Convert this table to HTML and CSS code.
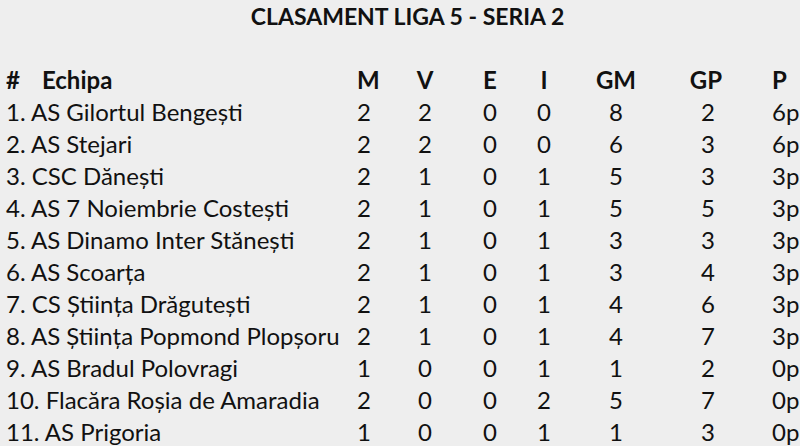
FILE: index.html
```
<!DOCTYPE html>
<html lang="ro">
<head>
<meta charset="utf-8">
<title>Clasament Liga 5 - Seria 2</title>
<link rel="stylesheet" href="styles.css">
</head>
<body>
<h1 class="title">CLASAMENT LIGA 5 - SERIA 2</h1>
<div class="table">
  <div class="row head">
    <div class="team"><span class="hash">#</span>Echipa</div>
    <div class="c m">M</div><div class="c">V</div><div class="c">E</div><div class="c">I</div><div class="c">GM</div><div class="c">GP</div><div class="c p">P</div>
  </div>
  <div class="row"><div class="team">1. AS Gilortul Bengești</div><div class="c m">2</div><div class="c">2</div><div class="c">0</div><div class="c">0</div><div class="c">8</div><div class="c gp">2</div><div class="c p">6p</div></div>
  <div class="row"><div class="team">2. AS Stejari</div><div class="c m">2</div><div class="c">2</div><div class="c">0</div><div class="c">0</div><div class="c">6</div><div class="c gp">3</div><div class="c p">6p</div></div>
  <div class="row"><div class="team">3. CSC Dănești</div><div class="c m">2</div><div class="c">1</div><div class="c">0</div><div class="c">1</div><div class="c">5</div><div class="c gp">3</div><div class="c p">3p</div></div>
  <div class="row"><div class="team">4. AS 7 Noiembrie Costești</div><div class="c m">2</div><div class="c">1</div><div class="c">0</div><div class="c">1</div><div class="c">5</div><div class="c gp">5</div><div class="c p">3p</div></div>
  <div class="row"><div class="team">5. AS Dinamo Inter Stănești</div><div class="c m">2</div><div class="c">1</div><div class="c">0</div><div class="c">1</div><div class="c">3</div><div class="c gp">3</div><div class="c p">3p</div></div>
  <div class="row"><div class="team">6. AS Scoarța</div><div class="c m">2</div><div class="c">1</div><div class="c">0</div><div class="c">1</div><div class="c">3</div><div class="c gp">4</div><div class="c p">3p</div></div>
  <div class="row"><div class="team">7. CS Știința Drăgutești</div><div class="c m">2</div><div class="c">1</div><div class="c">0</div><div class="c">1</div><div class="c">4</div><div class="c gp">6</div><div class="c p">3p</div></div>
  <div class="row"><div class="team">8. AS Știința Popmond Plopșoru</div><div class="c m">2</div><div class="c">1</div><div class="c">0</div><div class="c">1</div><div class="c">4</div><div class="c gp">7</div><div class="c p">3p</div></div>
  <div class="row"><div class="team">9. AS Bradul Polovragi</div><div class="c m">1</div><div class="c">0</div><div class="c">0</div><div class="c">1</div><div class="c">1</div><div class="c gp">2</div><div class="c p">0p</div></div>
  <div class="row"><div class="team">10. Flacăra Roșia de Amaradia</div><div class="c m">2</div><div class="c">0</div><div class="c">0</div><div class="c">2</div><div class="c">5</div><div class="c gp">7</div><div class="c p">0p</div></div>
  <div class="row"><div class="team">11. AS Prigoria</div><div class="c m">1</div><div class="c">0</div><div class="c">0</div><div class="c">1</div><div class="c">1</div><div class="c gp">3</div><div class="c p">0p</div></div>
</div>
</body>
</html>
```
FILE: styles.css
```
html, body {
  margin: 0;
  padding: 0;
  background: #eeeeee;
  color: #111111;
  font-family: "Lato", "DejaVu Sans", sans-serif;
  overflow: hidden;
}
.title {
  margin: 0;
  height: 64px;
  padding-left: 15px;
  line-height: 33px;
  font-size: 23px;
  font-weight: bold;
  text-align: center;
}
.table {
  padding-left: 6px;
}
.row {
  display: grid;
  grid-template-columns: 349px 45px 50px 80px 28px 116px 64px 1fr;
  height: 32px;
  line-height: 32px;
  font-size: 24px;
  white-space: nowrap;
}
.head {
  font-weight: bold;
}
.hash {
  display: inline-block;
  width: 36px;
}
.c {
  text-align: center;
}
.c.m {
  text-align: left;
  padding-left: 2px;
}
.c.gp {
  padding-left: 4px;
}
.c.p {
  text-align: left;
  padding-left: 34px;
}
```
